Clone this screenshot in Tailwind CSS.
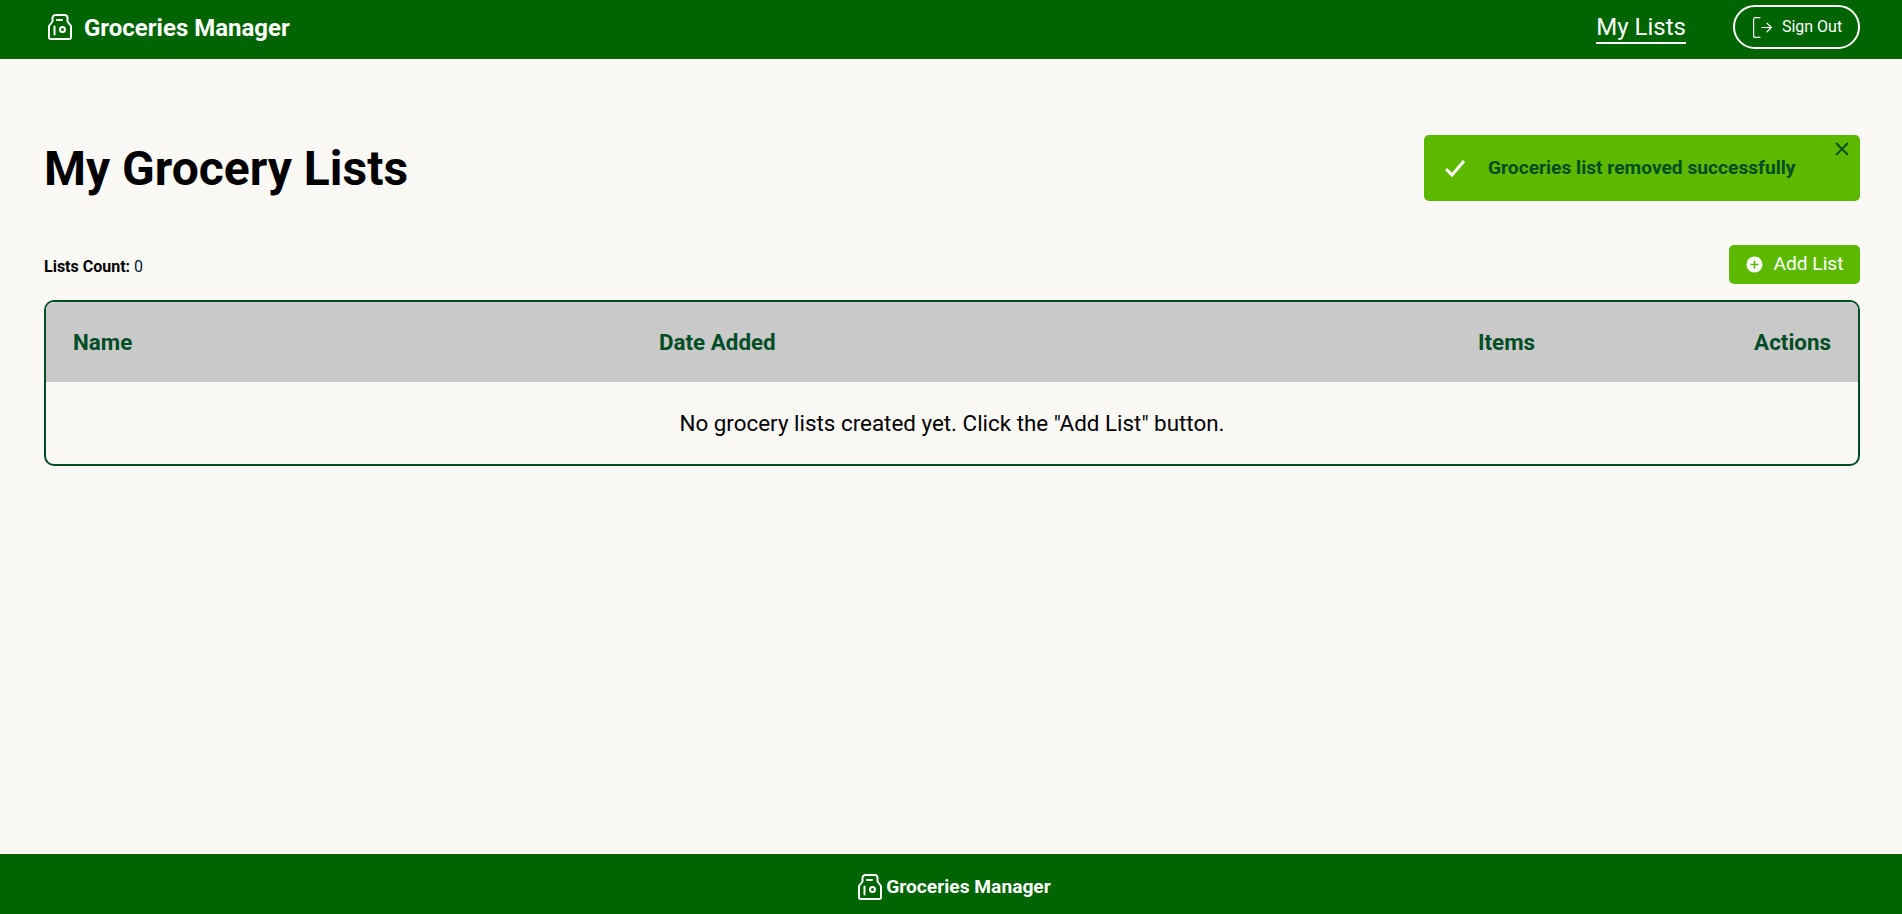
<!DOCTYPE html>
<html lang="en">
<head>
<meta charset="utf-8">
<title>Groceries Manager</title>
<script src="https://cdn.jsdelivr.net/npm/@tailwindcss/browser@4"></script>
</head>
<body class="m-0 h-[914px] overflow-hidden flex flex-col bg-[#fbf9f5] font-['Roboto',sans-serif] text-black">
<header class="h-[59px] shrink-0 bg-[#006400] flex items-center justify-between pl-[48px] pr-[42px] pb-[5px] text-white">
  <div class="flex items-center gap-[12px]">
    <svg class="w-[24px] h-[26px]" viewBox="0 0 24 26" fill="none" stroke="white" stroke-width="2" stroke-linecap="round" stroke-linejoin="round"><path d="M7.500 1h9a3 3 0 0 1 3 3v3.500L23 12V23.500a1.500 1.500 0 0 1-1.500 1.500H2.500A1.500 1.500 0 0 1 1 23.500V12L4.500 7.500V4a3 3 0 0 1 3-3z"/><path d="M9 6h5"/><circle cx="14.500" cy="15.500" r="2.500"/><path d="M6.500 12.500v8"/></svg>
    <span class="text-[24px] font-bold leading-none mt-[1px]">Groceries Manager</span>
  </div>
  <nav class="flex items-center gap-[47px]">
    <a class="text-[24px] leading-[29px] border-b-2 border-white mt-[3px]">My Lists</a>
    <button class="w-[127px] h-[44px] rounded-[22px] border-2 border-white flex items-center justify-center gap-[10px] pl-[2px] text-[16px] text-white">
      <svg class="w-[19px] h-[21px]" viewBox="0 0 19 21" fill="none" stroke="white" stroke-width="1.200" stroke-linecap="round" stroke-linejoin="round"><path d="M7 .6H2.200A1.600 1.600 0 0 0 .6 2.200v16.600a1.600 1.600 0 0 0 1.600 1.600H7"/><path d="M9 10.500h9.400M14 6.200l4.400 4.300-4.400 4.300"/></svg>
      Sign Out
    </button>
  </nav>
</header>
<main class="flex-1 pl-[44px] pr-[42px]">
  <div class="h-[66px] mt-[76px] flex items-center justify-between">
    <h1 class="text-[48px] font-bold leading-none pt-[1px]">My Grocery Lists</h1>
    <div class="relative w-[436px] h-[66px] rounded-[5px] bg-[#5cb900] flex items-center pl-[20px] gap-[22px]">
      <svg class="w-[22px] h-[18px]" viewBox="0 0 22 18" fill="none" stroke="white" stroke-width="3"><path d="M2 10l6 6L20 2"/></svg>
      <span class="text-[19.200px] font-bold text-[#004d26]">Groceries list removed successfully</span>
      <svg class="absolute top-[7px] right-[11px] w-[14px] h-[14px]" viewBox="0 0 14 14" fill="none" stroke="#004d26" stroke-width="1.800"><path d="M1 1l12 12M13 1L1 13"/></svg>
    </div>
  </div>
  <div class="mt-[44px] h-[39px] flex items-center justify-between">
    <p class="text-[16px] pt-[4px]"><b class="font-bold">Lists Count:</b> <span class="text-[#001a33]">0</span></p>
    <button class="w-[131px] h-[39px] rounded-[5px] bg-[#5cb900] text-white text-[19.200px] flex items-center justify-center gap-[10px] pl-[1px]">
      <svg class="w-[17px] h-[17px]" viewBox="0 0 17 17"><circle cx="8.500" cy="8.500" r="8" fill="white"/><path d="M8.500 4.500v8M4.500 8.500h8" stroke="#5cb900" stroke-width="1.500"/></svg>
      Add List
    </button>
  </div>
  <div class="mt-[16px] border-2 border-[#004d26] rounded-[10px] overflow-hidden">
    <div class="h-[80px] bg-[#c9c9c9] grid grid-cols-[586px_1fr_auto_auto] items-center pl-[27px] pr-[27px] pt-[1px] text-[22.400px] font-bold text-[#004d26]">
      <span>Name</span><span>Date Added</span><span class="mr-[219px]">Items</span><span>Actions</span>
    </div>
    <div class="h-[82px] flex items-center justify-center pt-[2px] text-[22.400px]">No grocery lists created yet. Click the "Add List" button.</div>
  </div>
</main>
<footer class="h-[60px] shrink-0 bg-[#006400] flex items-center justify-center gap-[4px] pl-[7px] pt-[5px] text-white">
  <svg class="w-[24px] h-[26px]" viewBox="0 0 24 26" fill="none" stroke="white" stroke-width="2" stroke-linecap="round" stroke-linejoin="round"><path d="M7.500 1h9a3 3 0 0 1 3 3v3.500L23 12V23.500a1.500 1.500 0 0 1-1.500 1.500H2.500A1.500 1.500 0 0 1 1 23.500V12L4.500 7.500V4a3 3 0 0 1 3-3z"/><path d="M9 6h5"/><circle cx="14.500" cy="15.500" r="2.500"/><path d="M6.500 12.500v8"/></svg>
  <span class="text-[19.200px] font-bold leading-none">Groceries Manager</span>
</footer>
</body>
</html>
